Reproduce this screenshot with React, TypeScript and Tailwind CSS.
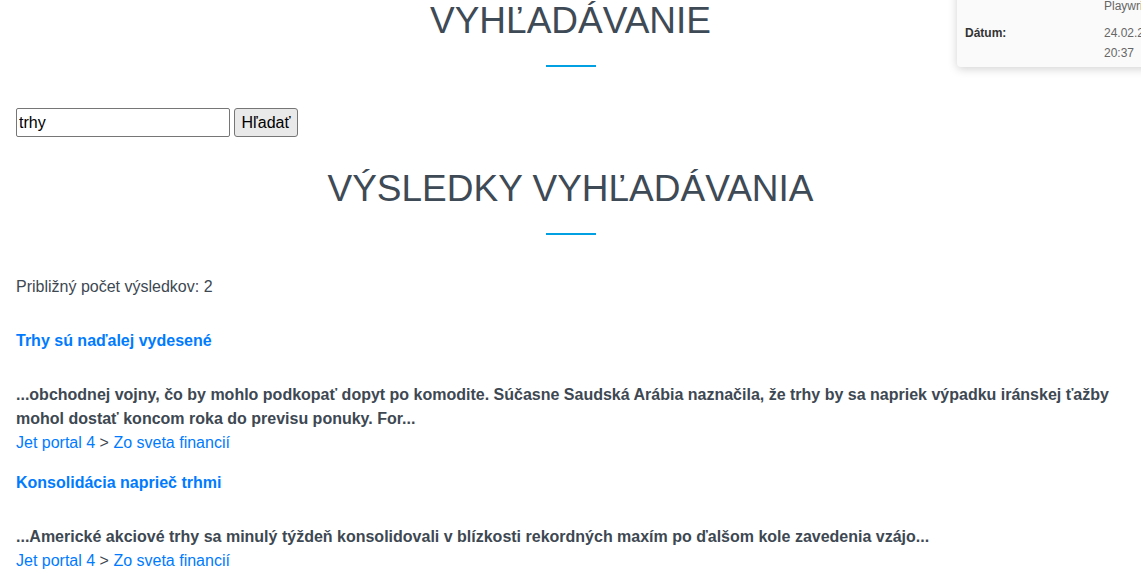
const RESULTS = [
  {
    title: "Trhy sú naďalej vydesené",
    snippet:
      "...obchodnej vojny, čo by mohlo podkopať dopyt po komodite. Súčasne Saudská Arábia naznačila, že trhy by sa napriek výpadku iránskej ťažby mohol dostať koncom roka do previsu ponuky. For...",
  },
  {
    title: "Konsolidácia naprieč trhmi",
    snippet:
      "...Americké akciové trhy sa minulý týždeň konsolidovali v blízkosti rekordných maxím po ďalšom kole zavedenia vzájo...",
  },
];

function Heading({ children }: { children: React.ReactNode }) {
  return (
    <div className="flex flex-col items-center">
      <h1 className="text-[37px] leading-[41px] font-normal text-[#3e4a55]">{children}</h1>
      <span className="mt-6 block h-[2px] w-[50px] bg-[#00a0e3]" />
    </div>
  );
}

export default function App() {
  return (
    <div
      className="relative min-h-screen overflow-hidden bg-white text-[16px] leading-6 text-[#3d4852]"
      style={{ fontFamily: '"Liberation Sans", Arial, sans-serif' }}
    >
      <div className="absolute top-[-12px] left-[957px] w-[230px] rounded bg-[#fafafa] px-2 pt-2 pb-1 text-[12px] leading-5 shadow-[0_2px_10px_rgba(0,0,0,0.18)]">
        <div className="grid grid-cols-[139px_1fr]">
          <span />
          <span className="text-[#666]">Playwright</span>
        </div>
        <div className="mt-[7px] grid grid-cols-[139px_1fr]">
          <span className="font-bold text-[#333]">Dátum:</span>
          <span className="text-[#666]">
            24.02.2025
            <br />
            20:37
          </span>
        </div>
      </div>

      <main className="px-4">
        <Heading>VYHĽADÁVANIE</Heading>

        <form className="mt-[41px] flex items-center gap-1" onSubmit={(e) => e.preventDefault()}>
          <input
            defaultValue="trhy"
            className="h-[29px] w-[214px] border border-[#767676] rounded-[2px] px-[2px] text-[16px] text-black outline-none"
          />
          <button
            type="submit"
            className="h-[29px] w-[64px] rounded-[3px] border border-[#767676] bg-[#e9e9e9] text-[16px] text-black"
          >
            Hľadať
          </button>
        </form>

        <div className="mt-[31px]">
          <Heading>VÝSLEDKY VYHĽADÁVANIA</Heading>
        </div>

        <p className="mt-10">Približný počet výsledkov: 2</p>

        <div className="mt-[30px] flex flex-col gap-4">
          {RESULTS.map((r) => (
            <div key={r.title}>
              <a href="#" className="block font-bold text-[#007bff]">
                {r.title}
              </a>
              <p className="mt-[30px] font-bold">{r.snippet}</p>
              <p>
                <a href="#" className="text-[#007bff]">
                  Jet portal 4
                </a>{" "}
                &gt;{" "}
                <a href="#" className="text-[#007bff]">
                  Zo sveta financií
                </a>
              </p>
            </div>
          ))}
        </div>
      </main>
    </div>
  );
}
